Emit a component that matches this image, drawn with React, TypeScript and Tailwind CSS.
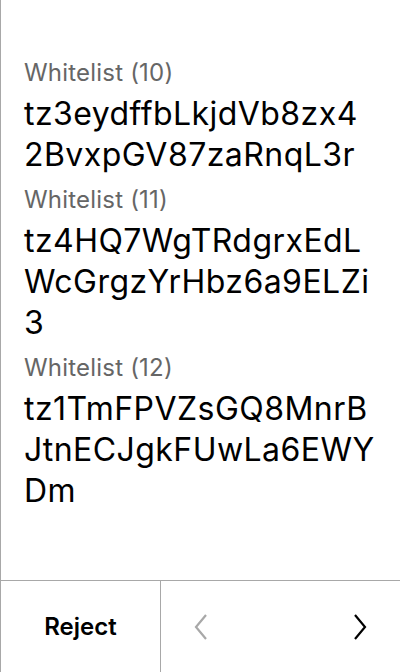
const entries = [
  { label: 'Whitelist (10)', address: 'tz3eydffbLkjdVb8zx42BvxpGV87zaRnqL3r' },
  { label: 'Whitelist (11)', address: 'tz4HQ7WgTRdgrxEdLWcGrgzYrHbz6a9ELZi3' },
  { label: 'Whitelist (12)', address: 'tz1TmFPVZsGQ8MnrBJtnECJgkFUwLa6EWYDm' },
];

export default function App() {
  return (
    <div className="w-[400px] h-[672px] flex flex-col bg-white border-l border-[#a8a8a8] font-['Inter',sans-serif] text-black">
      {/* Entries */}
      <div className="flex-1 flex flex-col gap-[9px] pl-[23px] pr-[24px] pt-[57px]">
        {entries.map((e) => (
          <div key={e.label} className="flex flex-col gap-[4px]">
            <span className="text-[24px] leading-[32px] tracking-[0.2px] text-[#666]">{e.label}</span>
            <span className="text-[32px] leading-[41px] tracking-[0.45px] break-all">{e.address}</span>
          </div>
        ))}
      </div>

      {/* Footer */}
      <div className="h-[92px] flex border-t border-[#a8a8a8]">
        <button className="w-[160px] flex items-center justify-center border-r border-[#a8a8a8] text-[24px] font-semibold">
          Reject
        </button>
        <div className="flex-1 flex items-center justify-between pl-[32px] pr-[32px]">
          <svg width="16" height="28" viewBox="0 0 16 28" fill="none" stroke="#a8a8a8" strokeWidth="2.2">
            <polyline points="13,2 3,14 13,26" />
          </svg>
          <svg width="16" height="28" viewBox="0 0 16 28" fill="none" stroke="#000" strokeWidth="2.2">
            <polyline points="3,2 13,14 3,26" />
          </svg>
        </div>
      </div>
    </div>
  );
}
